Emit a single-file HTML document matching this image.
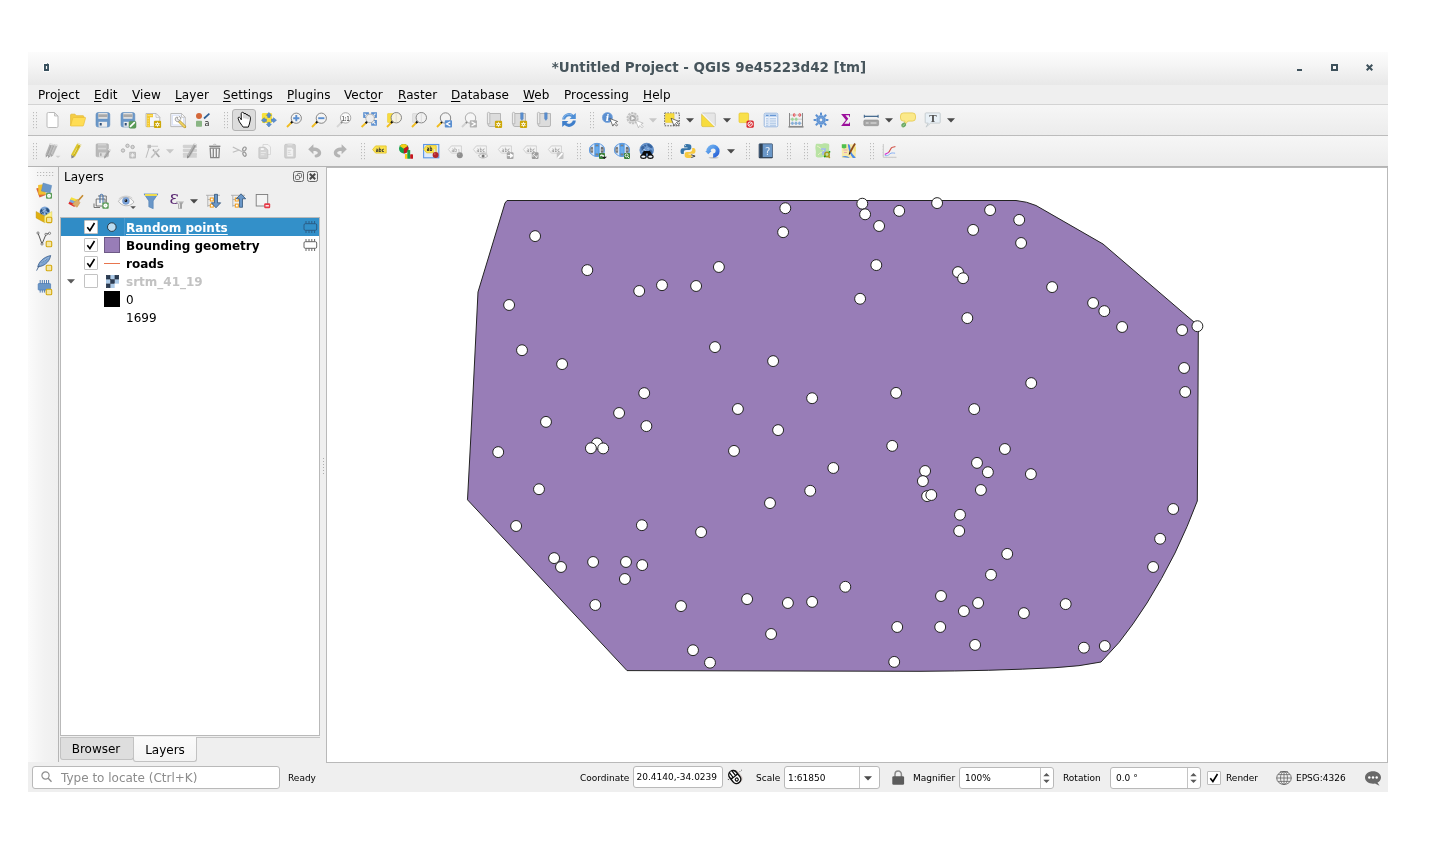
<!DOCTYPE html>
<html lang="en">
<head>
<meta charset="utf-8">
<title>*Untitled Project - QGIS</title>
<style>
html,body{margin:0;padding:0;background:#fff;}
body{width:1436px;height:860px;position:relative;overflow:hidden;font-family:"DejaVu Sans","Liberation Sans",sans-serif;font-size:12px;color:#000;}
.abs{position:absolute;}
#win{will-change:transform;position:absolute;left:28px;top:52px;width:1360px;height:740px;background:#efefef;}
#title{position:absolute;left:0;top:0;width:1360px;height:33px;background:linear-gradient(#fcfcfc 0%,#f5f5f5 40%,#e8e8e8 100%);}
#title .t{position:absolute;left:0;width:1360px;top:8px;padding-left:2px;box-sizing:border-box;text-align:center;font-weight:bold;font-size:13.45px;color:#47555c;line-height:16px;}
#menu{position:absolute;left:0;top:33px;width:1360px;height:19px;background:#efefef;border-bottom:1px solid #d3d3d3;}
#menu span{position:absolute;top:3px;line-height:15px;font-size:12px;white-space:nowrap;letter-spacing:.09px;}
#menu u{text-decoration:underline;text-underline-offset:2px;}
.tb{position:absolute;left:0;width:1360px;height:30px;background:linear-gradient(#f6f6f6,#ececec);}
#tb1{top:53px;border-bottom:1px solid #bcbcbc;}
#tb2{top:84px;border-bottom:1px solid #b4b4b4;}
.ic{position:absolute;width:16px;height:16px;overflow:visible;}
.hd{position:absolute;width:5px;height:18px;}
#ldock{position:absolute;left:0;top:115px;width:30px;height:595px;background:linear-gradient(90deg,#fbfbfb 0,#f2f2f2 55%,#efefef 100%);border-right:1px solid #b5b5b5;}
#canvas{position:absolute;left:298px;top:115px;width:1060px;height:594px;background:#fff;border:1px solid #b9b9b9;}
#tree{position:absolute;left:32px;top:165px;width:258px;height:517px;background:#fff;border:1px solid #b9b9b9;}
.row{position:absolute;left:0;width:258px;height:18px;}
.row .lbl{position:absolute;left:65px;top:2px;line-height:16px;font-size:12px;white-space:nowrap;}
.cb{position:absolute;left:23px;top:2px;width:12px;height:12px;background:#fff;border:1px solid #c3c3c3;border-radius:1px;}
.st{position:absolute;font-size:9px;line-height:12px;white-space:nowrap;top:720px;}
.fld{position:absolute;background:#fff;border:1px solid #b9b9b9;border-radius:3px;box-sizing:border-box;font-size:9px;line-height:20px;white-space:nowrap;overflow:hidden;}
</style>
</head>
<body>
<div id="win">
  <div id="title"><svg class="abs" style="left:15px;top:10px;width:7px;height:10px;overflow:visible" viewBox="-1 -1 7 10"><path d="M0 1h3l.7-1 .6 1h.7v7h-5z" fill="#fff" stroke="#fff" stroke-width="1.600" opacity=".9"/><path d="M0 1h3l.7-1 .6 1h.7v7h-5z" fill="#38505d"/><rect x="1.900" y="3" width="1.200" height="3" fill="#f4f6f7"/></svg>
<div class="abs" style="left:1268.600px;top:16.600px;width:5.600px;height:2.600px;background:#3f525c"></div>
<div class="abs" style="left:1303px;top:12px;width:3px;height:3px;border:2px solid #3f525c;background:#fbfbfb"></div>
<svg class="abs" style="left:1338px;top:12px;width:7px;height:7px" viewBox="0 0 7 7"><path d="M.7 .7l5.600 5.600M6.300 .7l-5.600 5.600" stroke="#3f525c" stroke-width="2"/></svg><div class="t">*Untitled Project - QGIS 9e45223d42 [tm]</div></div>
  <div id="menu">
    <span style="left:10px">Pro<u>j</u>ect</span>
    <span style="left:66px"><u>E</u>dit</span>
    <span style="left:104px"><u>V</u>iew</span>
    <span style="left:147px"><u>L</u>ayer</span>
    <span style="left:195px"><u>S</u>ettings</span>
    <span style="left:259px"><u>P</u>lugins</span>
    <span style="left:316px">Vect<u>o</u>r</span>
    <span style="left:370px"><u>R</u>aster</span>
    <span style="left:423px"><u>D</u>atabase</span>
    <span style="left:495px"><u>W</u>eb</span>
    <span style="left:536px">Pro<u>c</u>essing</span>
    <span style="left:615px"><u>H</u>elp</span>
  </div>
  <div class="tb" id="tb1"><svg class="hd" style="left:5px;top:7px" viewBox="0 0 5 18"><rect x="0" y="0" width="1" height="1.200" fill="#bcbcbc"/><rect x="0" y="3" width="1" height="1.200" fill="#bcbcbc"/><rect x="0" y="6" width="1" height="1.200" fill="#bcbcbc"/><rect x="0" y="9" width="1" height="1.200" fill="#bcbcbc"/><rect x="0" y="12" width="1" height="1.200" fill="#bcbcbc"/><rect x="0" y="15" width="1" height="1.200" fill="#bcbcbc"/><rect x="3" y="0" width="1" height="1.200" fill="#bcbcbc"/><rect x="3" y="3" width="1" height="1.200" fill="#bcbcbc"/><rect x="3" y="6" width="1" height="1.200" fill="#bcbcbc"/><rect x="3" y="9" width="1" height="1.200" fill="#bcbcbc"/><rect x="3" y="12" width="1" height="1.200" fill="#bcbcbc"/><rect x="3" y="15" width="1" height="1.200" fill="#bcbcbc"/></svg>
<svg class="ic" style="left:17px;top:7px;width:16px;height:16px" viewBox="0 0 16 16"><path d="M3.5 .5h6l3.5 3.5v10.2a1.3 1.3 0 0 1-1.3 1.3h-8.400a1.300 1.300 0 0 1-1.300-1.300v-12.400a1.300 1.300 0 0 1 1.300-1.300z" fill="#fff" stroke="#b9b9b9" stroke-width="1"/><path d="M9.500 .5v3.500h3.500z" fill="#e4e4e4" stroke="#b9b9b9" stroke-width=".8" stroke-linejoin="round"/></svg>
<svg class="ic" style="left:42px;top:7px;width:16px;height:16px" viewBox="0 0 16 16"><path d="M.6 13.500v-10.500a.8 .8 0 0 1 .8-.8h3.600l1.300 1.500h6.700a.8 .8 0 0 1 .8 .8v2z" fill="#f5cd45" stroke="#e3b62a" stroke-width=".7"/><path d="M.6 13.700l2.200-7.600a.8 .8 0 0 1 .8-.6h11.400a.5 .5 0 0 1 .5 .7l-2 7.200a.8 .8 0 0 1-.8 .6h-11.500a.6 .6 0 0 1-.6-.3z" fill="#ffdd55" stroke="#e9bf3a" stroke-width=".7"/></svg>
<svg class="ic" style="left:67px;top:7px;width:16px;height:16px" viewBox="0 0 16 16"><rect x="1" y=".6" width="13.800" height="14.400" rx="2" fill="#6a97c8" stroke="#5e89ba" stroke-width=".6"/><rect x="3.300" y="1" width="9.200" height="5.800" fill="#e2e2e2"/><rect x="3.300" y="2.300" width="9.200" height="2.800" fill="#a9a9a9"/><rect x="3.600" y="9.800" width="8.500" height="5" fill="#ececec"/><rect x="4.700" y="11" width="2" height="2.500" fill="#2c4d78"/></svg>
<svg class="ic" style="left:92px;top:7px;width:16px;height:16px" viewBox="0 0 16 16"><rect x="1" y=".6" width="13.800" height="14.400" rx="2" fill="#6a97c8" stroke="#5e89ba" stroke-width=".6"/><rect x="3.300" y="1" width="9.200" height="5.800" fill="#e2e2e2"/><rect x="3.300" y="2.300" width="9.200" height="2.800" fill="#a9a9a9"/><rect x="3.600" y="9.800" width="8.500" height="5" fill="#ececec"/><rect x="4.700" y="11" width="2" height="2.500" fill="#2c4d78"/><rect x="9" y="9.200" width="7" height="7" rx="1.500" fill="#5a9c57" stroke="#4d8a4a" stroke-width=".5"/><path d="M10.500 14.300l3.800-3.700" stroke="#fff" stroke-width="1.700" stroke-linecap="round"/></svg>
<svg class="ic" style="left:117px;top:7px;width:16px;height:16px" viewBox="0 0 16 16"><path d="M1 1.500h10l3.800 3.800v9.200h-13.800z" fill="#f4f6fb" stroke="#b5b5b5" stroke-width=".9"/><path d="M11 1.500v3.800h3.800z" fill="#fff" stroke="#b5b5b5" stroke-width=".7"/><path d="M1.700 2h6.300v3.200h-3v10h-3.300z" fill="#f3c931"/><path d="M2.500 3.500h5M2.500 6.500h1.500M2.500 9h1.500M2.500 11.500h1.500M2.500 13.800h1.500" stroke="#fbe58a" stroke-width=".7"/><rect x="8.900" y="8.700" width="7.200" height="7.300" rx="1.100" fill="#cda80a"/><path d="M12.45 9.40L13.07 11.32L15.05 10.90L13.70 12.40L15.05 13.90L13.07 13.48L12.45 15.40L11.82 13.48L9.85 13.90L11.20 12.40L9.85 10.90L11.82 11.32z" fill="#fff"/><circle cx="12.450" cy="12.400" r=".7" fill="#cda80a"/></svg>
<svg class="ic" style="left:142px;top:7px;width:16px;height:16px" viewBox="0 0 16 16"><path d="M.8 1.500h10.700l3.700 3.700v9.400h-14.400z" fill="#fafbff" stroke="#b2b2b2" stroke-width=".9"/><path d="M2.300 3.200h8.500l2.800 2.800v7h-11.300z" fill="#fff" stroke="#d5def5" stroke-width="1"/><path d="M11.500 1.500v3.700h3.700z" fill="#fff" stroke="#b2b2b2" stroke-width=".7"/><path d="M9.500 9.500l5.300 5.300" stroke="#b5952a" stroke-width="2.800" stroke-linecap="round"/><path d="M9.600 9.600l5 5" stroke="#f2d565" stroke-width="1.600" stroke-linecap="round"/><path d="M6.200 5.200a2.500 2.500 0 1 0 3.800 3l-1.600-.3-.9-1.100 .4-1.500zM8.800 4.300a2.500 2.500 0 0 1 1.900 3.300" fill="#eee" stroke="#8a8a8a" stroke-width=".8"/></svg>
<svg class="ic" style="left:167px;top:7px;width:16px;height:16px" viewBox="0 0 16 16"><circle cx="4" cy="4" r="3" fill="#d4683a"/><rect x="1" y="8.700" width="6" height="6" rx=".8" fill="#8ab584"/><path d="M9 6.500l5.400-4.800" stroke="#2e5f95" stroke-width="1.700"/><text x="9.400" y="14" font-family="DejaVu Sans" font-size="8" fill="#222">a</text></svg>
<svg class="hd" style="left:196px;top:7px" viewBox="0 0 5 18"><rect x="0" y="0" width="1" height="1.200" fill="#bcbcbc"/><rect x="0" y="3" width="1" height="1.200" fill="#bcbcbc"/><rect x="0" y="6" width="1" height="1.200" fill="#bcbcbc"/><rect x="0" y="9" width="1" height="1.200" fill="#bcbcbc"/><rect x="0" y="12" width="1" height="1.200" fill="#bcbcbc"/><rect x="0" y="15" width="1" height="1.200" fill="#bcbcbc"/><rect x="3" y="0" width="1" height="1.200" fill="#bcbcbc"/><rect x="3" y="3" width="1" height="1.200" fill="#bcbcbc"/><rect x="3" y="6" width="1" height="1.200" fill="#bcbcbc"/><rect x="3" y="9" width="1" height="1.200" fill="#bcbcbc"/><rect x="3" y="12" width="1" height="1.200" fill="#bcbcbc"/><rect x="3" y="15" width="1" height="1.200" fill="#bcbcbc"/></svg>
<div class="abs" style="left:204px;top:4px;width:22px;height:20px;border:1px solid #b3b3b3;border-radius:3px;background:#dcdcdc"></div>
<svg class="ic" style="left:208px;top:7px;width:16px;height:16px" viewBox="0 0 16 16"><path d="M5.3 7.800L5.200 1.700Q5.300 .3 6.600 .3Q7.900 .3 8 1.700Q9 .9 9.900 1.700L10.100 2.700Q11 2 11.900 2.900L12.100 3.900Q13.200 3.300 14 4.300Q14.600 5.600 14.300 8L13.400 12L12.300 15.100L7.200 15.100L6 13.500L3.400 9.800L2.100 6.200Q2.100 5 3.300 5.200Q4.300 5.700 5.300 7.800Z" fill="#fff" stroke="#111" stroke-width="1" stroke-linejoin="round"/><path d="M8 2v4.300M10 3v3.600M12 4.200v3" stroke="#9a9a9a" stroke-width=".8"/></svg>
<svg class="ic" style="left:233px;top:7px;width:16px;height:16px" viewBox="0 0 16 16"><rect x=".9" y=".9" width="10.200" height="10.100" rx="1.300" fill="#f9e13a"/><g fill="#5b8fd0" stroke="#3f75b5" stroke-width=".5" stroke-linejoin="round"><path d="M7.900 .4l2.500 3h-1.300v2h-2.400v-2h-1.300z"/><path d="M7.900 15l2.500-2.800h-1.300v-1.800h-2.400v1.800h-1.300z"/><path d="M.4 8.200l2.900-2.500v1.300h2.100v2.400h-2.100v1.300z"/><path d="M15.500 8.200l-3-2.500v1.300h-2v2.400h2v1.300z"/></g></svg>
<svg class="ic" style="left:258px;top:7px;width:16px;height:16px" viewBox="0 0 16 16"><path d="M1 15l4.600-4.700" stroke="#f0bc1f" stroke-width="1.900"/><path d="M5 11l1.700-1.700" stroke="#111" stroke-width="2"/><circle cx="10.3" cy="6.2" r="5.1" fill="#f4f4f4" stroke="#7a7a7a" stroke-width=".9"/><path d="M10.300 3.100v6.200M7.200 6.200h6.200" stroke="#5b8fd0" stroke-width="1.900"/></svg>
<svg class="ic" style="left:283px;top:7px;width:16px;height:16px" viewBox="0 0 16 16"><path d="M1 15l4.600-4.700" stroke="#f0bc1f" stroke-width="1.900"/><path d="M5 11l1.700-1.700" stroke="#111" stroke-width="2"/><circle cx="10.3" cy="6.2" r="5.1" fill="#f4f4f4" stroke="#7a7a7a" stroke-width=".9"/><path d="M7.200 6.200h6.200" stroke="#5b8fd0" stroke-width="1.900"/></svg>
<svg class="ic" style="left:308px;top:7px;width:16px;height:16px" viewBox="0 0 16 16"><path d="M1 15l4.600-4.700" stroke="#d6d6d6" stroke-width="1.900"/><path d="M5 11l1.700-1.700" stroke="#8a8a8a" stroke-width="2"/><circle cx="9.6" cy="5.9" r="5.2" fill="#fbfbfb" stroke="#a0a0a0" stroke-width=".9"/><text x="5.700" y="8.600" font-family="DejaVu Sans" font-weight="bold" font-size="7" fill="#6a6a6a" textLength="8" lengthAdjust="spacingAndGlyphs">1:1</text></svg>
<svg class="ic" style="left:333px;top:7px;width:16px;height:16px" viewBox="0 0 16 16"><g transform="translate(2.2 0.2) rotate(0 2.75 2.75)"><rect width="5.700" height="5.700" fill="#5b8fd0"/><path d="M5.500 5.500l-3.800-1 1-1-1.700-1.700 .8-.8 1.700 1.700 1-1z" fill="#f4f4f4"/></g><g transform="translate(10.4 0.2) rotate(90 2.75 2.75)"><rect width="5.700" height="5.700" fill="#5b8fd0"/><path d="M5.500 5.500l-3.800-1 1-1-1.700-1.700 .8-.8 1.700 1.700 1-1z" fill="#f4f4f4"/></g><g transform="translate(10.4 8.2) rotate(180 2.75 2.75)"><rect width="5.700" height="5.700" fill="#5b8fd0"/><path d="M5.500 5.500l-3.800-1 1-1-1.700-1.700 .8-.8 1.700 1.700 1-1z" fill="#f4f4f4"/></g><circle cx="9.100" cy="6.400" r="4.300" fill="#ececec" stroke="#9a9a9a" stroke-width=".7"/><path d="M.6 15l4.600-4.400" stroke="#f0bc1f" stroke-width="1.900"/><path d="M4.600 11.200l1.500-1.500" stroke="#111" stroke-width="2"/></svg>
<svg class="ic" style="left:358px;top:7px;width:16px;height:16px" viewBox="0 0 16 16"><rect x="1.500" y="1.500" width="7" height="9" rx=".6" fill="#f7dc3d" stroke="#e8c62a" stroke-width=".5"/><path d="M1 15l4.600-4.700" stroke="#f0bc1f" stroke-width="1.900"/><path d="M5 11l1.700-1.700" stroke="#111" stroke-width="2"/><circle cx="10.3" cy="5.7" r="5.2" fill="#f4f1e3" stroke="#7a7a7a" stroke-width=".9"/><path d="M10.300 1v9.400" stroke="#e0dccb" stroke-width="1.500" opacity=".7"/></svg>
<svg class="ic" style="left:383px;top:7px;width:16px;height:16px" viewBox="0 0 16 16"><rect x="1.500" y="1.500" width="7" height="9" rx=".6" fill="#e3e3e3" stroke="#cfcfcf" stroke-width=".5"/><path d="M1 15l4.600-4.700" stroke="#f0bc1f" stroke-width="1.900"/><path d="M5 11l1.700-1.700" stroke="#111" stroke-width="2"/><circle cx="10.3" cy="5.7" r="5.2" fill="#f1f1f1" stroke="#7a7a7a" stroke-width=".9"/><path d="M10.300 1v9.400" stroke="#dcdcdc" stroke-width="1.200" opacity=".8"/></svg>
<svg class="ic" style="left:408px;top:7px;width:16px;height:16px" viewBox="0 0 16 16"><path d="M1 15l4.600-4.700" stroke="#f0bc1f" stroke-width="1.900"/><path d="M5 11l1.700-1.700" stroke="#111" stroke-width="2"/><circle cx="9.5" cy="6" r="5.2" fill="#f3f3f3" stroke="#7a7a7a" stroke-width=".9"/><rect x="8.800" y="8.300" width="7.200" height="7.200" rx=".8" fill="#5b8fd0"/><path d="M14.300 9.800l-3.800 2.100 3.800 2.100" fill="none" stroke="#fff" stroke-width="1.300"/></svg>
<svg class="ic" style="left:433px;top:7px;width:16px;height:16px" viewBox="0 0 16 16"><path d="M1 15l4.600-4.700" stroke="#d0d0d0" stroke-width="1.900"/><path d="M5 11l1.700-1.700" stroke="#888" stroke-width="2"/><circle cx="9.5" cy="6" r="5.2" fill="#f6f6f6" stroke="#a5a5a5" stroke-width=".9"/><rect x="8.800" y="8.300" width="7.200" height="7.200" rx=".8" fill="#b3b3b3"/><path d="M10.500 9.800l3.800 2.100-3.800 2.100" fill="none" stroke="#fff" stroke-width="1.300"/></svg>
<svg class="ic" style="left:458px;top:7px;width:16px;height:16px" viewBox="0 0 16 16"><path d="M2 1.500h12.500v11.500a1.500 1.500 0 0 1-1.500 1.500h-9a2 2 0 0 1-2-2z" fill="#dcdcdc" stroke="#b0b0b0" stroke-width=".9"/><path d="M1.400 1.500a1.200 1.200 0 0 1 2.400 0v10.300h-2.400z" fill="#ececec" stroke="#b0b0b0" stroke-width=".8"/><rect x="8.900" y="8.700" width="7.200" height="7.300" rx="1.100" fill="#cda80a"/><path d="M12.45 9.40L13.07 11.32L15.05 10.90L13.70 12.40L15.05 13.90L13.07 13.48L12.45 15.40L11.82 13.48L9.85 13.90L11.20 12.40L9.85 10.90L11.82 11.32z" fill="#fff"/><circle cx="12.450" cy="12.400" r=".7" fill="#cda80a"/></svg>
<svg class="ic" style="left:483px;top:7px;width:16px;height:16px" viewBox="0 0 16 16"><path d="M2 1.500h12.500v11.500a1.500 1.500 0 0 1-1.500 1.500h-9a2 2 0 0 1-2-2z" fill="#dcdcdc" stroke="#b0b0b0" stroke-width=".9"/><path d="M1.400 1.500a1.200 1.200 0 0 1 2.400 0v10.300h-2.400z" fill="#ececec" stroke="#b0b0b0" stroke-width=".8"/><path d="M9.600 .8h2.600v6l-1.300 1.600-1.300-1.600z" fill="#5b8fd0" stroke="#4878b5" stroke-width=".4"/><rect x="8.900" y="8.700" width="7.200" height="7.300" rx="1.100" fill="#cda80a"/><path d="M12.45 9.40L13.07 11.32L15.05 10.90L13.70 12.40L15.05 13.90L13.07 13.48L12.45 15.40L11.82 13.48L9.85 13.90L11.20 12.40L9.85 10.90L11.82 11.32z" fill="#fff"/><circle cx="12.450" cy="12.400" r=".7" fill="#cda80a"/></svg>
<svg class="ic" style="left:508px;top:7px;width:16px;height:16px" viewBox="0 0 16 16"><path d="M2 1.500h12.500v11.500a1.500 1.500 0 0 1-1.500 1.500h-9a2 2 0 0 1-2-2z" fill="#dcdcdc" stroke="#b0b0b0" stroke-width=".9"/><path d="M1.400 1.500a1.200 1.200 0 0 1 2.400 0v10.300h-2.400z" fill="#ececec" stroke="#b0b0b0" stroke-width=".8"/><path d="M8.600 .8h2.600v6l-1.300 1.600-1.300-1.600z" fill="#5b8fd0" stroke="#4878b5" stroke-width=".4"/></svg>
<svg class="ic" style="left:533px;top:7px;width:16px;height:16px" viewBox="0 0 16 16"><path d="M1.200 7.500a6.800 6.800 0 0 1 11.300-4.600l2.300-2v6h-6.200l2-1.900a4.200 4.200 0 0 0-6.500 2.500z" fill="#4f8fd6"/><path d="M14.800 8.500a6.800 6.800 0 0 1-11.300 4.600l-2.300 2v-6h6.200l-2 1.900a4.200 4.200 0 0 0 6.500-2.500z" fill="#3f7fcb"/><path d="M2 6.800a6 6 0 0 1 9-3.800" fill="none" stroke="#9cc3ee" stroke-width=".8"/></svg>
<svg class="hd" style="left:562px;top:7px" viewBox="0 0 5 18"><rect x="0" y="0" width="1" height="1.200" fill="#bcbcbc"/><rect x="0" y="3" width="1" height="1.200" fill="#bcbcbc"/><rect x="0" y="6" width="1" height="1.200" fill="#bcbcbc"/><rect x="0" y="9" width="1" height="1.200" fill="#bcbcbc"/><rect x="0" y="12" width="1" height="1.200" fill="#bcbcbc"/><rect x="0" y="15" width="1" height="1.200" fill="#bcbcbc"/><rect x="3" y="0" width="1" height="1.200" fill="#bcbcbc"/><rect x="3" y="3" width="1" height="1.200" fill="#bcbcbc"/><rect x="3" y="6" width="1" height="1.200" fill="#bcbcbc"/><rect x="3" y="9" width="1" height="1.200" fill="#bcbcbc"/><rect x="3" y="12" width="1" height="1.200" fill="#bcbcbc"/><rect x="3" y="15" width="1" height="1.200" fill="#bcbcbc"/></svg>
<svg class="ic" style="left:573px;top:7px;width:16px;height:16px" viewBox="0 0 16 16"><circle cx="6.400" cy="5.500" r="5.300" fill="#5b8fd0"/><circle cx="6.400" cy="5.500" r="5" fill="none" stroke="#8fb5e4" stroke-width=".5"/><text x="4.700" y="8.900" font-family="DejaVu Serif" font-style="italic" font-weight="bold" font-size="9" fill="#fff">i</text><path d="M8.8 6.5l0 8.200 2-1.700 1.400 3 1.500-.7-1.400-2.900 2.600-.2z" fill="#fff" stroke="#333" stroke-width=".6" transform="rotate(-22 8.8 6.5)"/></svg>
<svg class="ic" style="left:598px;top:7px;width:16px;height:16px" viewBox="0 0 16 16"><circle cx="6.600" cy="6.200" r="5.200" fill="none" stroke="#c2c2c2" stroke-width="1.800" stroke-dasharray="2.300 .9"/><circle cx="6.600" cy="6.200" r="4.300" fill="#f0f0f0" stroke="#b5b5b5" stroke-width=".6"/><circle cx="6.600" cy="6.200" r="3.300" fill="#ababab"/><path d="M5.400 4.200l3.500 2-3.500 2z" fill="#f6f6f6"/><path d="M9.4 8.2l0 8.200 2-1.700 1.400 3 1.500-.7-1.400-2.900 2.600-.2z" fill="#fff" stroke="#b0b0b0" stroke-width=".6" transform="rotate(-22 9.4 8.2)"/></svg>
<svg class="ic" style="left:636px;top:7px;width:16px;height:16px" viewBox="0 0 16 16"><rect x=".7" y="1" width="14.600" height="12.800" fill="#eee" stroke="#555" stroke-width="1" stroke-dasharray="1.500 1.200"/><rect x="1.300" y="1.600" width="8.800" height="8.800" rx=".6" fill="#f7dc3d" stroke="#e5c42d" stroke-width=".5"/><path d="M7 6.3l0 8.200 2-1.700 1.400 3 1.500-.7-1.400-2.900 2.600-.2z" fill="#fff" stroke="#333" stroke-width=".6" transform="rotate(-22 7 6.3)"/></svg>
<svg class="ic" style="left:673px;top:7px;width:16px;height:16px" viewBox="0 0 16 16"><rect x=".7" y="1" width="13.600" height="13.600" rx="1.200" fill="#e6e6e6" stroke="#c4c4c4" stroke-width=".8"/><path d="M.7 2.300v11.100a1.200 1.200 0 0 0 1.200 1.200h11.100z" fill="#f7dc3d" stroke="#e5c42d" stroke-width=".6"/><path d="M1 1.300l13 13" stroke="#fff" stroke-width=".9"/></svg>
<svg class="ic" style="left:710px;top:7px;width:16px;height:16px" viewBox="0 0 16 16"><rect x="1" y="1" width="9.600" height="9.600" rx="1.200" fill="#f9e04a" stroke="#e5c42d" stroke-width=".7"/><rect x="8.500" y="8.500" width="7.300" height="7.300" rx="1.600" fill="#d9262c"/><circle cx="12.150" cy="12.150" r="2.200" fill="none" stroke="#fff" stroke-width="1"/><path d="M10.500 13.800l3.300-3.300" stroke="#fff" stroke-width="1"/></svg>
<svg class="ic" style="left:735px;top:7px;width:16px;height:16px" viewBox="0 0 16 16"><rect x="1.200" y="1.200" width="13.600" height="13.600" rx="1.200" fill="#eef3fb" stroke="#8fb1dc" stroke-width=".9"/><rect x="1.800" y="1.800" width="12.400" height="3.200" fill="#c3d7f0"/><path d="M3 3.400h2.500M7 3.400h6" stroke="#5b8fd0" stroke-width="1"/><path d="M5.900 5.500v9" stroke="#b7cdea" stroke-width=".7"/><path d="M3 6.800h2M7 6.800h6M3 9h2M7 9h6M3 11.200h2M7 11.200h6M3 13.200h2M7 13.200h6" stroke="#8fb1dc" stroke-width=".8"/></svg>
<svg class="ic" style="left:760px;top:7px;width:16px;height:16px" viewBox="0 0 16 16"><path d="M1.500 1v14M14.500 1v14" stroke="#8a8a8a" stroke-width="1"/><path d="M.5 14.800h15" stroke="#8a8a8a" stroke-width="1.700"/><path d="M2 3h12M2 7.200h12M2 11.300h12" stroke="#b5b5b5" stroke-width=".7"/><g fill="#e04a4f"><ellipse cx="6.200" cy="3" rx="1.300" ry="1.700"/><ellipse cx="11.700" cy="3" rx="1.300" ry="1.700"/></g><g fill="#9fd69a"><ellipse cx="4.400" cy="7.200" rx="1.300" ry="1.700"/><ellipse cx="8.200" cy="7.200" rx="1.300" ry="1.700"/></g><g fill="#86b0da"><ellipse cx="4.400" cy="11.300" rx="1.300" ry="1.700"/><ellipse cx="8" cy="11.300" rx="1.300" ry="1.700"/><ellipse cx="11.500" cy="11.300" rx="1.300" ry="1.700"/></g><g fill="#fff" opacity=".7"><ellipse cx="6.200" cy="3" rx=".4" ry="1"/><ellipse cx="11.700" cy="3" rx=".4" ry="1"/></g></svg>
<svg class="ic" style="left:785px;top:7px;width:16px;height:16px" viewBox="0 0 16 16"><rect x="7" y=".6" width="2" height="3.600" rx=".4" fill="#5b8fd0" transform="rotate(0 8 8)"/><rect x="7" y=".6" width="2" height="3.600" rx=".4" fill="#5b8fd0" transform="rotate(45 8 8)"/><rect x="7" y=".6" width="2" height="3.600" rx=".4" fill="#5b8fd0" transform="rotate(90 8 8)"/><rect x="7" y=".6" width="2" height="3.600" rx=".4" fill="#5b8fd0" transform="rotate(135 8 8)"/><rect x="7" y=".6" width="2" height="3.600" rx=".4" fill="#5b8fd0" transform="rotate(180 8 8)"/><rect x="7" y=".6" width="2" height="3.600" rx=".4" fill="#5b8fd0" transform="rotate(225 8 8)"/><rect x="7" y=".6" width="2" height="3.600" rx=".4" fill="#5b8fd0" transform="rotate(270 8 8)"/><rect x="7" y=".6" width="2" height="3.600" rx=".4" fill="#5b8fd0" transform="rotate(315 8 8)"/><circle cx="8" cy="8" r="3.100" fill="none" stroke="#5b8fd0" stroke-width="3.400"/><circle cx="8" cy="8" r="4.600" fill="none" stroke="#a9c8ec" stroke-width=".5"/><circle cx="8" cy="8" r="2.900" fill="none" stroke="#8db3e2" stroke-width=".5"/></svg>
<svg class="ic" style="left:810px;top:7px;width:16px;height:16px" viewBox="0 0 16 16"><text x="2.500" y="14" font-family="DejaVu Serif" font-weight="bold" font-size="17" fill="#9b0e9b" textLength="10.500" lengthAdjust="spacingAndGlyphs">Σ</text></svg>
<svg class="ic" style="left:835px;top:7px;width:16px;height:16px" viewBox="0 0 16 16"><path d="M1.300 4.300h13.800" stroke="#2b5680" stroke-width="1.100"/><path d="M1.300 2.800v3M15.100 2.800v3" stroke="#2b5680" stroke-width=".9"/><rect x=".8" y="8" width="14.800" height="5.700" rx="1.200" fill="#a5a5a5" stroke="#8c8c8c" stroke-width=".6"/><path d="M2.800 11h2.800M7.500 11h6" stroke="#e6e6e6" stroke-width="1.100"/></svg>
<svg class="ic" style="left:872px;top:7px;width:16px;height:16px" viewBox="0 0 16 16"><path d="M3.500 .9h9a3 3 0 0 1 3 3v2.200a3 3 0 0 1-3 3h-4.500l-3.800 4.500 .8-4.500h-1.500a3 3 0 0 1-3-3v-2.200a3 3 0 0 1 3-3z" fill="#fbe98a" stroke="#e6c94a" stroke-width=".8"/><ellipse cx="3.700" cy="13" rx="2.600" ry="2.100" fill="#6aa864" transform="rotate(-35 3.700 13)"/><path d="M2.600 14l2.200-2" stroke="#b7dcb2" stroke-width=".8"/></svg>
<svg class="ic" style="left:897px;top:7px;width:16px;height:16px" viewBox="0 0 16 16"><path d="M1 .9h13.400a.8 .8 0 0 1 .8 .8v8.600a.8 .8 0 0 1-.8 .8h-8.700l-4.700 4 2.300-4h-2.300a.8 .8 0 0 1-.8-.8v-8.600a.8 .8 0 0 1 .8-.8z" fill="#e8f0f6" stroke="#c3c9cd" stroke-width=".9"/><text x="4.300" y="9.800" font-family="DejaVu Serif" font-weight="bold" font-size="10" fill="#555">T</text></svg>
<svg class="ic" style="left:621px;top:13px;width:8px;height:5px" viewBox="0 0 8 5"><path d="M0 .3h8l-4 4.200z" fill="#c8c8c8"/></svg>
<svg class="ic" style="left:658px;top:13px;width:8px;height:5px" viewBox="0 0 8 5"><path d="M0 .3h8l-4 4.200z" fill="#4a4a4a"/></svg>
<svg class="ic" style="left:695px;top:13px;width:8px;height:5px" viewBox="0 0 8 5"><path d="M0 .3h8l-4 4.200z" fill="#4a4a4a"/></svg>
<svg class="ic" style="left:857px;top:13px;width:8px;height:5px" viewBox="0 0 8 5"><path d="M0 .3h8l-4 4.200z" fill="#4a4a4a"/></svg>
<svg class="ic" style="left:919px;top:13px;width:8px;height:5px" viewBox="0 0 8 5"><path d="M0 .3h8l-4 4.200z" fill="#4a4a4a"/></svg></div>
  <div class="tb" id="tb2"><svg class="hd" style="left:5px;top:7px" viewBox="0 0 5 18"><rect x="0" y="0" width="1" height="1.200" fill="#bcbcbc"/><rect x="0" y="3" width="1" height="1.200" fill="#bcbcbc"/><rect x="0" y="6" width="1" height="1.200" fill="#bcbcbc"/><rect x="0" y="9" width="1" height="1.200" fill="#bcbcbc"/><rect x="0" y="12" width="1" height="1.200" fill="#bcbcbc"/><rect x="0" y="15" width="1" height="1.200" fill="#bcbcbc"/><rect x="3" y="0" width="1" height="1.200" fill="#bcbcbc"/><rect x="3" y="3" width="1" height="1.200" fill="#bcbcbc"/><rect x="3" y="6" width="1" height="1.200" fill="#bcbcbc"/><rect x="3" y="9" width="1" height="1.200" fill="#bcbcbc"/><rect x="3" y="12" width="1" height="1.200" fill="#bcbcbc"/><rect x="3" y="15" width="1" height="1.200" fill="#bcbcbc"/></svg>
<svg class="ic" style="left:17px;top:7px;width:16px;height:16px" viewBox="0 0 16 16"><path d="M0.80 14.60L3.27 12.13L0.66 11.11z" fill="#9a9a9a"/><path d="M3.27 12.13L7.50 1.31L4.90 0.29L0.66 11.11z" fill="#b2b2b2"/><path d="M2.36 11.77L6.59 0.95" stroke="#9d9d9d" stroke-width=".9"/><path d="M7.07 2.43L7.50 1.31L4.90 0.29L4.46 1.41z" fill="#eee" opacity=".85"/><path d="M3.20 15.30L5.68 12.84L3.08 11.81z" fill="#9a9a9a"/><path d="M5.68 12.84L10.10 1.72L7.50 0.68L3.08 11.81z" fill="#b9b9b9"/><path d="M4.77 12.48L9.19 1.36" stroke="#a5a5a5" stroke-width=".9"/><path d="M9.66 2.83L10.10 1.72L7.50 0.68L7.06 1.80z" fill="#eee" opacity=".85"/><path d="M5.80 14.30L8.39 11.95L5.83 10.81z" fill="#a5a5a5"/><path d="M8.39 11.95L12.78 2.17L10.22 1.03L5.83 10.81z" fill="#c3c3c3"/><path d="M7.49 11.55L11.88 1.77" stroke="#b0b0b0" stroke-width=".9"/><path d="M12.29 3.27L12.78 2.17L10.22 1.03L9.73 2.12z" fill="#eee" opacity=".85"/><path d="M10.500 12.700h5l-2.500 2.200z" fill="#cfcfcf"/></svg>
<svg class="ic" style="left:42px;top:7px;width:16px;height:16px" viewBox="0 0 16 16"><path d="M1.50 15.50L4.96 13.74L1.10 11.64z" fill="#858585"/><path d="M4.96 13.74L11.43 1.85L7.57 -0.25L1.10 11.64z" fill="#dcc62e"/><path d="M3.61 13.00L10.08 1.12" stroke="#b49c14" stroke-width=".9"/><path d="M10.86 2.91L11.43 1.85L7.57 -0.25L6.99 0.80z" fill="#eee" opacity=".85"/><path d="M3.900 11.300l3.200-6" stroke="#f5eb8c" stroke-width="1" opacity=".7"/></svg>
<svg class="ic" style="left:67px;top:7px;width:16px;height:16px" viewBox="0 0 16 16"><rect x="1" y=".8" width="12.500" height="13" rx="1.200" fill="#b9b9b9" stroke="#adadad" stroke-width=".5"/><rect x="3" y="1.200" width="8.300" height="5.200" fill="#d6d6d6"/><rect x="3" y="2.300" width="8.300" height="2.500" fill="#c0c0c0"/><rect x="4" y="9.500" width="7.500" height="4.300" fill="#dedede"/><rect x="5" y="10.300" width="1.600" height="2.500" fill="#a9a9a9"/><path d="M9.00 15.80L11.76 13.73L9.54 12.39z" fill="#999"/><path d="M11.76 13.73L15.71 7.17L13.49 5.83L9.54 12.39z" fill="#b0b0b0"/><path d="M10.98 13.26L14.93 6.70" stroke="#9c9c9c" stroke-width=".9"/><path d="M15.09 8.20L15.71 7.17L13.49 5.83L12.87 6.86z" fill="#eee" opacity=".85"/></svg>
<svg class="ic" style="left:92px;top:7px;width:16px;height:16px" viewBox="0 0 16 16"><g fill="#d7d7d7" stroke="#a9a9a9" stroke-width=".9"><circle cx="3" cy="7.500" r="1.700"/><circle cx="7.500" cy="2.800" r="1.700"/><circle cx="12.600" cy="4" r="1.700"/></g><rect x="9.200" y="8.800" width="6.800" height="6.800" rx="1" fill="#bcbcbc"/><path d="M12.600 10v4.400M10.400 12.200h4.400M11 10.600l3.200 3.200M14.200 10.600l-3.200 3.200" stroke="#f2f2f2" stroke-width=".9"/></svg>
<svg class="ic" style="left:117px;top:7px;width:16px;height:16px" viewBox="0 0 16 16"><rect x="2.500" y="1.800" width="3.500" height="3.300" fill="#bcbcbc"/><path d="M6 3.300h7" stroke="#cdcdcd" stroke-width="1.200"/><path d="M4 5l-3 9.800" stroke="#bcbcbc" stroke-width="1"/><path d="M8 6.500l6.300 7.500" stroke="#aaa" stroke-width="1.800"/><path d="M14.200 6l-8 8.800" stroke="#c2c2c2" stroke-width="1.600"/><path d="M8.500 9l3-3.300" stroke="#e2e2e2" stroke-width="1"/></svg>
<svg class="ic" style="left:154px;top:7px;width:16px;height:16px" viewBox="0 0 16 16"><g fill="#d2d2d2"><rect x=".8" y="1.700" width="14.200" height="3.300" rx="1"/><rect x=".8" y="5.700" width="14.200" height="3.300" rx="1"/><rect x=".8" y="9.700" width="14.200" height="3.300" rx="1"/><rect x=".8" y="13" width="14.200" height="1.800" rx=".8"/></g><path d="M5.00 15.60L8.00 13.65L5.23 12.03z" fill="#8a8a8a"/><path d="M8.00 13.65L14.98 1.71L12.22 0.09L5.23 12.03z" fill="#b0b0b0"/><path d="M7.03 13.08L14.01 1.14" stroke="#8f8f8f" stroke-width=".9"/><path d="M14.38 2.74L14.98 1.71L12.22 0.09L11.61 1.13z" fill="#eee" opacity=".85"/></svg>
<svg class="ic" style="left:179px;top:7px;width:16px;height:16px" viewBox="0 0 16 16"><path d="M6 2.200c.3-1.300 3.200-1.300 3.500 0" fill="none" stroke="#b5b5b5" stroke-width=".9"/><path d="M2.200 3.300h11.200" stroke="#858585" stroke-width="1.400"/><path d="M3.200 5.200h9.200l-.5 9.400h-8.200z" fill="#f4f4f4" stroke="#858585" stroke-width="1.300" stroke-linejoin="round"/><path d="M6.300 5.500v8.700M9.300 5.500v8.700" stroke="#858585" stroke-width="1.300"/></svg>
<svg class="ic" style="left:204px;top:7px;width:16px;height:16px" viewBox="0 0 16 16"><path d="M.8 4l10 5M.8 9.300l6.500-2.300" stroke="#bdbdbd" stroke-width="1.200"/><ellipse cx="12.400" cy="6" rx="1.500" ry="2.100" fill="none" stroke="#999" stroke-width="1.200" transform="rotate(35 12.400 6)"/><ellipse cx="12.500" cy="11.200" rx="1.500" ry="2.100" fill="none" stroke="#999" stroke-width="1.200" transform="rotate(-25 12.500 11.200)"/></svg>
<svg class="ic" style="left:229px;top:7px;width:16px;height:16px" viewBox="0 0 16 16"><path d="M6 1.500h5l2.500 2.500v7.500h-7.500z" fill="#f4f4f4" stroke="#d2d2d2" stroke-width=".8"/><path d="M2.700 4.300h5.300l2.800 2.800v7.500a.8 .8 0 0 1-.8 .8h-7.300a.8 .8 0 0 1-.8-.8v-9.500a.8 .8 0 0 1 .8-.8z" fill="#d4d4d4" stroke="#c0c0c0" stroke-width=".8"/><rect x="3.800" y="5.200" width="3" height="1.800" fill="#f8f8f8"/><path d="M3.800 9.500h5M3.800 11.700h3.500" stroke="#e8e8e8" stroke-width="1"/></svg>
<svg class="ic" style="left:254px;top:7px;width:16px;height:16px" viewBox="0 0 16 16"><rect x="2.700" y="1.300" width="10.600" height="13.800" rx="1.200" fill="#d0d0d0" stroke="#c2c2c2" stroke-width=".8"/><rect x="5.500" y=".6" width="5" height="1.800" rx=".6" fill="#dcdcdc"/><path d="M4.800 4.300h4.600l2 2v7.500h-6.600z" fill="#f3f3f3" stroke="#c9c9c9" stroke-width=".5"/><path d="M5.800 7.300h3.500M5.800 9.300h2.500M5.800 11.300h3.500" stroke="#d3d3d3" stroke-width=".9"/></svg>
<svg class="ic" style="left:279px;top:7px;width:16px;height:16px" viewBox="0 0 16 16"><path d="M1.200 6.300l5.200-5v3.200c4.500 0 7.800 2 7.800 5.600 0 2.500-2 4.300-5 4.300-1 0-1.600-.6-1.600-1.500 0-.8.500-1.300 1.300-1.500 1.300-.3 1.900-.8 1.900-1.700 0-1.300-1.700-1.800-4.400-1.800v3.400z" fill="#b4b4b4"/></svg>
<svg class="ic" style="left:304px;top:7px;width:16px;height:16px" viewBox="0 0 16 16"><path d="M14.800 6.300l-5.200-5v3.200c-4.500 0-7.800 2-7.800 5.600 0 2.500 2 4.300 5 4.300 1 0 1.600-.6 1.600-1.500 0-.8-.5-1.300-1.300-1.500-1.300-.3-1.900-.8-1.900-1.700 0-1.300 1.700-1.800 4.400-1.800v3.400z" fill="#b4b4b4"/></svg>
<svg class="ic" style="left:138px;top:13px;width:8px;height:5px" viewBox="0 0 8 5"><path d="M0 .3h8l-4 4.200z" fill="#c8c8c8"/></svg>
<svg class="hd" style="left:333px;top:7px" viewBox="0 0 5 18"><rect x="0" y="0" width="1" height="1.200" fill="#bcbcbc"/><rect x="0" y="3" width="1" height="1.200" fill="#bcbcbc"/><rect x="0" y="6" width="1" height="1.200" fill="#bcbcbc"/><rect x="0" y="9" width="1" height="1.200" fill="#bcbcbc"/><rect x="0" y="12" width="1" height="1.200" fill="#bcbcbc"/><rect x="0" y="15" width="1" height="1.200" fill="#bcbcbc"/><rect x="3" y="0" width="1" height="1.200" fill="#bcbcbc"/><rect x="3" y="3" width="1" height="1.200" fill="#bcbcbc"/><rect x="3" y="6" width="1" height="1.200" fill="#bcbcbc"/><rect x="3" y="9" width="1" height="1.200" fill="#bcbcbc"/><rect x="3" y="12" width="1" height="1.200" fill="#bcbcbc"/><rect x="3" y="15" width="1" height="1.200" fill="#bcbcbc"/></svg>
<svg class="ic" style="left:344px;top:7px;width:16px;height:16px" viewBox="0 0 16 16"><path d="M.6 6.5l3-3.600h10.6v7.200h-10.6z" fill="#fbe24d" stroke="#e2c327" stroke-width=".8" stroke-linejoin="round"/><text x="3.700" y="8.7" font-family="DejaVu Sans" font-weight="bold" font-size="5.9" fill="#333" textLength="8.6" lengthAdjust="spacingAndGlyphs">abc</text></svg>
<svg class="ic" style="left:369px;top:7px;width:16px;height:16px" viewBox="0 0 16 16"><circle cx="6.800" cy="5.700" r="4.800" fill="#18a04a"/><path d="M6.800 5.700l-4-2.600a4.800 4.800 0 0 1 8 0z" fill="#f6cc15"/><path d="M6.800 5.700l4-2.600a4.800 4.800 0 0 1-4 7.400z" fill="#c5161d"/><rect x="7.900" y="11" width="2.600" height="4.800" rx=".5" fill="#f6cc15"/><rect x="10.300" y="7" width="2.900" height="8.800" rx=".6" fill="#18a04a"/><rect x="13.200" y="11.200" width="2.800" height="4.600" rx=".6" fill="#c5161d"/></svg>
<svg class="ic" style="left:395px;top:7px;width:16px;height:16px" viewBox="0 0 16 16"><rect x=".6" y="1.500" width="15.200" height="13.300" fill="#dfeafa" stroke="#5b96e6" stroke-width="1.100"/><path d="M.6 6.2l3-3.600h9.6v7.200h-9.6z" fill="#fbe24d" stroke="#e2c327" stroke-width=".8" stroke-linejoin="round"/><text x="3.700" y="8.4" font-family="DejaVu Sans" font-weight="bold" font-size="6.2" fill="#222" textLength="5.6" lengthAdjust="spacingAndGlyphs">ab</text><path d="M11.400 6l.6 4.500" stroke="#ddd" stroke-width="1.300"/><circle cx="12.600" cy="11.900" r="3" fill="#b3262b"/><circle cx="11.800" cy="11" r=".8" fill="#d9686c"/></svg>
<svg class="ic" style="left:419px;top:7px;width:16px;height:16px" viewBox="0 0 16 16"><g transform="translate(.8 0)"><path d="M.6 6.5l3-3.600h10.0v7.200h-10.0z" fill="#f4f4f4" stroke="#c8c8c8" stroke-width=".8" stroke-linejoin="round"/><text x="3.700" y="8.7" font-family="DejaVu Sans" font-weight="normal" font-size="6" fill="#858585" textLength="5.6" lengthAdjust="spacingAndGlyphs">ab</text></g><path d="M11.700 6l.4 3.500" stroke="#ccc" stroke-width="1.100"/><circle cx="12.800" cy="12.200" r="3" fill="#8e8e8e"/><circle cx="12" cy="11.300" r=".8" fill="#aaa"/></svg>
<svg class="ic" style="left:444px;top:7px;width:16px;height:16px" viewBox="0 0 16 16"><g transform="translate(.8 0)"><path d="M.6 6.5l3-3.600h10.0v7.200h-10.0z" fill="#f4f4f4" stroke="#c8c8c8" stroke-width=".8" stroke-linejoin="round"/><text x="3.700" y="8.7" font-family="DejaVu Sans" font-weight="normal" font-size="6" fill="#858585" textLength="8.6" lengthAdjust="spacingAndGlyphs">abc</text></g><path d="M6.500 13c2.200-3 6.400-3 9.200 0-2.800 2.700-7 2.700-9.200 0z" fill="#f4f4f4" stroke="#999" stroke-width=".7"/><circle cx="11.100" cy="12.900" r="1.500" fill="#777"/><path d="M6.800 11.300c2.500-2 6.300-2 8.800 0" fill="none" stroke="#bbb" stroke-width=".6"/></svg>
<svg class="ic" style="left:469px;top:7px;width:16px;height:16px" viewBox="0 0 16 16"><g transform="translate(.8 0)"><path d="M.6 6.5l3-3.600h10.0v7.200h-10.0z" fill="#f4f4f4" stroke="#c8c8c8" stroke-width=".8" stroke-linejoin="round"/><text x="3.700" y="8.7" font-family="DejaVu Sans" font-weight="normal" font-size="6" fill="#858585" textLength="8.6" lengthAdjust="spacingAndGlyphs">abc</text></g><rect x="9.800" y="9.300" width="6.700" height="6.700" rx="1" fill="#a6a6a6"/><path d="M10.500 12.600h3v-1.900l2.600 1.900-2.600 1.900v-1.900" fill="#fff" stroke="#fff" stroke-width="1"/></svg>
<svg class="ic" style="left:494px;top:7px;width:16px;height:16px" viewBox="0 0 16 16"><g transform="translate(.8 0)"><path d="M.6 6.5l3-3.600h10.0v7.200h-10.0z" fill="#f4f4f4" stroke="#c8c8c8" stroke-width=".8" stroke-linejoin="round"/><text x="3.700" y="8.7" font-family="DejaVu Sans" font-weight="normal" font-size="6" fill="#858585" textLength="8.6" lengthAdjust="spacingAndGlyphs">abc</text></g><rect x="9.800" y="9.300" width="6.700" height="6.700" rx="1" fill="#9c9c9c"/><path d="M11.500 11.300l3.300 3.300" stroke="#fff" stroke-width=".9"/><path d="M11.100 13.900a2.300 2.300 0 0 1 1.700-3.400M15.200 12.300a2.300 2.300 0 0 1-1.600 2.700" fill="none" stroke="#fff" stroke-width=".8"/></svg>
<svg class="ic" style="left:519px;top:7px;width:16px;height:16px" viewBox="0 0 16 16"><g transform="translate(.8 0)"><path d="M.6 6.5l3-3.600h10.0v7.200h-10.0z" fill="#f4f4f4" stroke="#c8c8c8" stroke-width=".8" stroke-linejoin="round"/><text x="3.700" y="8.7" font-family="DejaVu Sans" font-weight="normal" font-size="6" fill="#858585" textLength="8.6" lengthAdjust="spacingAndGlyphs">abc</text></g><rect x="9.800" y="9.300" width="6.700" height="6.700" rx="1" fill="#c4c4c4"/><path d="M11 15l4-4.300" stroke="#fff" stroke-width="1.800" stroke-linecap="round"/></svg>
<svg class="hd" style="left:549px;top:7px" viewBox="0 0 5 18"><rect x="0" y="0" width="1" height="1.200" fill="#bcbcbc"/><rect x="0" y="3" width="1" height="1.200" fill="#bcbcbc"/><rect x="0" y="6" width="1" height="1.200" fill="#bcbcbc"/><rect x="0" y="9" width="1" height="1.200" fill="#bcbcbc"/><rect x="0" y="12" width="1" height="1.200" fill="#bcbcbc"/><rect x="0" y="15" width="1" height="1.200" fill="#bcbcbc"/><rect x="3" y="0" width="1" height="1.200" fill="#bcbcbc"/><rect x="3" y="3" width="1" height="1.200" fill="#bcbcbc"/><rect x="3" y="6" width="1" height="1.200" fill="#bcbcbc"/><rect x="3" y="9" width="1" height="1.200" fill="#bcbcbc"/><rect x="3" y="12" width="1" height="1.200" fill="#bcbcbc"/><rect x="3" y="15" width="1" height="1.200" fill="#bcbcbc"/></svg>
<svg class="ic" style="left:561px;top:7px;width:16px;height:16px" viewBox="0 0 16 16"><defs><linearGradient id="gg1" x1="0" x2="1"><stop offset="0" stop-color="#5e9ce4"/><stop offset=".13" stop-color="#a9caf0"/><stop offset=".3" stop-color="#e6effa"/><stop offset=".37" stop-color="#4391e2"/><stop offset=".5" stop-color="#62a8ec"/><stop offset=".63" stop-color="#4391e2"/><stop offset=".7" stop-color="#e6effa"/><stop offset=".87" stop-color="#a9caf0"/><stop offset="1" stop-color="#5e9ce4"/></linearGradient></defs><ellipse cx="8" cy="6.900" rx="8" ry="7" fill="url(#gg1)"/><ellipse cx="8" cy="6.900" rx="7.600" ry="6.600" fill="none" stroke="#5a96dc" stroke-width=".8"/><path d="M1.600 4.600c.9-.7 1.900-.6 2.500-.2v5c-.7.500-1.700.5-2.500-.2-.5-1.500-.5-3.100 0-4.600z" fill="#7d7d7d"/><path d="M14.400 4.600c-.9-.7-1.900-.6-2.600-.2v5c.7.500 1.700.5 2.600-.2.500-1.500.5-3.100 0-4.600z" fill="#6f6f6f"/><path d="M6.500 1.900c1-.7 2.100-.7 3 0l-.4 1.400h-2.200zM6.500 11.900c1 .7 2.100.7 3 0l-.4-1.400h-2.200z" fill="#808080"/><path d="M1.700 7h2.400M11.900 7h2.500" stroke="#c4c4c4" stroke-width=".9"/><path d="M5.600 5h4.800M5.600 7h4.800M5.600 9h4.800" stroke="#9ac8f4" stroke-width=".5"/><rect x="10" y="9.900" width="6" height="6" rx=".8" fill="#3a7f3a"/><path d="M11 13c0-1.600 2.600-2 3.400-.6l.7-.7v2.300h-2.300l.8-.8c-.5-.7-1.700-.5-1.700.4z" fill="#fff"/><path d="M12.800 13.800h5.200l-2.600 2.300z" fill="#1a1a1a"/></svg>
<svg class="ic" style="left:586px;top:7px;width:16px;height:16px" viewBox="0 0 16 16"><defs><linearGradient id="gg2" x1="0" x2="1"><stop offset="0" stop-color="#5e9ce4"/><stop offset=".13" stop-color="#a9caf0"/><stop offset=".3" stop-color="#e6effa"/><stop offset=".37" stop-color="#4391e2"/><stop offset=".5" stop-color="#62a8ec"/><stop offset=".63" stop-color="#4391e2"/><stop offset=".7" stop-color="#e6effa"/><stop offset=".87" stop-color="#a9caf0"/><stop offset="1" stop-color="#5e9ce4"/></linearGradient></defs><ellipse cx="8" cy="6.900" rx="8" ry="7" fill="url(#gg2)"/><ellipse cx="8" cy="6.900" rx="7.600" ry="6.600" fill="none" stroke="#5a96dc" stroke-width=".8"/><path d="M1.600 4.600c.9-.7 1.900-.6 2.500-.2v5c-.7.500-1.700.5-2.500-.2-.5-1.500-.5-3.100 0-4.600z" fill="#7d7d7d"/><path d="M14.400 4.600c-.9-.7-1.900-.6-2.600-.2v5c.7.500 1.700.5 2.600-.2.500-1.500.5-3.100 0-4.600z" fill="#6f6f6f"/><path d="M6.500 1.900c1-.7 2.100-.7 3 0l-.4 1.400h-2.200zM6.500 11.900c1 .7 2.100.7 3 0l-.4-1.400h-2.200z" fill="#808080"/><path d="M1.700 7h2.400M11.900 7h2.500" stroke="#c4c4c4" stroke-width=".9"/><path d="M5.600 5h4.800M5.600 7h4.800M5.600 9h4.800" stroke="#9ac8f4" stroke-width=".5"/><rect x="10" y="9.900" width="6" height="6" rx=".8" fill="#3a7f3a"/><circle cx="12.600" cy="12.400" r="1.500" fill="none" stroke="#fff" stroke-width=".9"/><path d="M13.600 13.500l1.600 1.700" stroke="#fff" stroke-width="1"/></svg>
<svg class="ic" style="left:611px;top:7px;width:16px;height:16px" viewBox="0 0 16 16"><circle cx="7.700" cy="7" r="7" fill="#6b98d0"/><path d="M2 4c1.500-1.500 3-1 3.500 0s-1 2-.5 3 2 1 1.500 2.500-2.500 1-3.500 0zM8 1.500c2-1 4 0 5 1.500s0 2.500-1.500 2-1-1.500-2.500-1.500zM10 7c1.500-.5 3 0 3.500 1.500s-1 3-2 2.500-2-2.500-1.500-4zM5.500 1.500l2 .5-1 2-1.500-1z" fill="#2f5a94" opacity=".85"/><path d="M3 9l2-3 1.500 2M8.500 5l1.500 1.500" stroke="#c5daf2" stroke-width=".7" fill="none"/><circle cx="7.700" cy="7" r="6.800" fill="none" stroke="#4a78b5" stroke-width=".6"/><path d="M5 8l-3 4.500h4.700l.8-2.300h.9l.8 2.300h4.700l-3-4.500z" fill="#0a0a0a"/><ellipse cx="4.400" cy="13.700" rx="2.700" ry="1.700" fill="#eef4fb" stroke="#0a0a0a" stroke-width="1.100"/><ellipse cx="11.400" cy="13.700" rx="2.700" ry="1.700" fill="#eef4fb" stroke="#0a0a0a" stroke-width="1.100"/></svg>
<svg class="hd" style="left:640px;top:7px" viewBox="0 0 5 18"><rect x="0" y="0" width="1" height="1.200" fill="#bcbcbc"/><rect x="0" y="3" width="1" height="1.200" fill="#bcbcbc"/><rect x="0" y="6" width="1" height="1.200" fill="#bcbcbc"/><rect x="0" y="9" width="1" height="1.200" fill="#bcbcbc"/><rect x="0" y="12" width="1" height="1.200" fill="#bcbcbc"/><rect x="0" y="15" width="1" height="1.200" fill="#bcbcbc"/><rect x="3" y="0" width="1" height="1.200" fill="#bcbcbc"/><rect x="3" y="3" width="1" height="1.200" fill="#bcbcbc"/><rect x="3" y="6" width="1" height="1.200" fill="#bcbcbc"/><rect x="3" y="9" width="1" height="1.200" fill="#bcbcbc"/><rect x="3" y="12" width="1" height="1.200" fill="#bcbcbc"/><rect x="3" y="15" width="1" height="1.200" fill="#bcbcbc"/></svg>
<svg class="ic" style="left:652px;top:7px;width:16px;height:16px" viewBox="0 0 16 16"><path d="M7 .9c-2.500 0-2.800 1.100-2.800 2.100v1.600h3.300v.6h-4.900c-1.500 0-2.100 1.400-2.100 3s.6 2.900 2 2.900h1.300v-1.900c0-1.300 1-2.200 2.300-2.200h3.300c1 0 1.900-.8 1.900-1.900v-2.100c0-1.300-1.300-2.100-4.300-2.100z" fill="#3674a8"/><circle cx="5.500" cy="2.500" r=".6" fill="#cfe0ef"/><path d="M9 15.100c2.500 0 2.800-1.100 2.800-2.100v-1.600h-3.300v-.6h4.900c1.500 0 2.100-1.400 2.100-3s-.6-2.900-2-2.900h-1.300v1.900c0 1.300-1 2.200-2.300 2.200h-3.300c-1 0-1.900.8-1.900 1.900v2.100c0 1.300 1.300 2.100 4.300 2.100z" fill="#f7c93e"/><path d="M11.300 11.800l3.800 1.300-3.800 1.500" fill="none" stroke="#333" stroke-width=".9"/></svg>
<svg class="ic" style="left:677px;top:7px;width:16px;height:16px" viewBox="0 0 16 16"><defs><linearGradient id="rg" x1="0" y1="0" x2="1" y2="1"><stop offset="0" stop-color="#86c0f4"/><stop offset=".5" stop-color="#4b8fe6"/><stop offset="1" stop-color="#1f4fd0"/></linearGradient></defs><ellipse cx="8.600" cy="14.700" rx="5" ry=".7" fill="#aaa" opacity=".7"/><path d="M8.100 14.800v-4.300a2.500 2.500 0 1 0-2.400-2.400h.9l-3.400 3.100-3-3.100h1.200a6.600 6.600 0 1 1 6.700 6.700z" fill="url(#rg)"/></svg>
<svg class="ic" style="left:699px;top:13px;width:8px;height:5px" viewBox="0 0 8 5"><path d="M0 .3h8l-4 4.200z" fill="#4a4a4a"/></svg>
<svg class="hd" style="left:718px;top:7px" viewBox="0 0 5 18"><rect x="0" y="0" width="1" height="1.200" fill="#bcbcbc"/><rect x="0" y="3" width="1" height="1.200" fill="#bcbcbc"/><rect x="0" y="6" width="1" height="1.200" fill="#bcbcbc"/><rect x="0" y="9" width="1" height="1.200" fill="#bcbcbc"/><rect x="0" y="12" width="1" height="1.200" fill="#bcbcbc"/><rect x="0" y="15" width="1" height="1.200" fill="#bcbcbc"/><rect x="3" y="0" width="1" height="1.200" fill="#bcbcbc"/><rect x="3" y="3" width="1" height="1.200" fill="#bcbcbc"/><rect x="3" y="6" width="1" height="1.200" fill="#bcbcbc"/><rect x="3" y="9" width="1" height="1.200" fill="#bcbcbc"/><rect x="3" y="12" width="1" height="1.200" fill="#bcbcbc"/><rect x="3" y="15" width="1" height="1.200" fill="#bcbcbc"/></svg>
<svg class="ic" style="left:730px;top:7px;width:16px;height:16px" viewBox="0 0 16 16"><rect x="1" y=".8" width="13.500" height="14.200" rx=".8" fill="#6a97c8" stroke="#3c4f66" stroke-width=".7"/><path d="M1.400 .9h3.300v14h-3.300z" fill="#2f4052"/><path d="M1 14.500h13.500" stroke="#2f4052" stroke-width=".9"/><text x="7" y="11.500" font-family="DejaVu Sans" font-size="10" fill="#eaf1fa">?</text></svg>
<svg class="hd" style="left:759px;top:7px" viewBox="0 0 5 18"><rect x="0" y="0" width="1" height="1.200" fill="#bcbcbc"/><rect x="0" y="3" width="1" height="1.200" fill="#bcbcbc"/><rect x="0" y="6" width="1" height="1.200" fill="#bcbcbc"/><rect x="0" y="9" width="1" height="1.200" fill="#bcbcbc"/><rect x="0" y="12" width="1" height="1.200" fill="#bcbcbc"/><rect x="0" y="15" width="1" height="1.200" fill="#bcbcbc"/><rect x="3" y="0" width="1" height="1.200" fill="#bcbcbc"/><rect x="3" y="3" width="1" height="1.200" fill="#bcbcbc"/><rect x="3" y="6" width="1" height="1.200" fill="#bcbcbc"/><rect x="3" y="9" width="1" height="1.200" fill="#bcbcbc"/><rect x="3" y="12" width="1" height="1.200" fill="#bcbcbc"/><rect x="3" y="15" width="1" height="1.200" fill="#bcbcbc"/></svg>
<svg class="hd" style="left:776px;top:7px" viewBox="0 0 5 18"><rect x="0" y="0" width="1" height="1.200" fill="#bcbcbc"/><rect x="0" y="3" width="1" height="1.200" fill="#bcbcbc"/><rect x="0" y="6" width="1" height="1.200" fill="#bcbcbc"/><rect x="0" y="9" width="1" height="1.200" fill="#bcbcbc"/><rect x="0" y="12" width="1" height="1.200" fill="#bcbcbc"/><rect x="0" y="15" width="1" height="1.200" fill="#bcbcbc"/><rect x="3" y="0" width="1" height="1.200" fill="#bcbcbc"/><rect x="3" y="3" width="1" height="1.200" fill="#bcbcbc"/><rect x="3" y="6" width="1" height="1.200" fill="#bcbcbc"/><rect x="3" y="9" width="1" height="1.200" fill="#bcbcbc"/><rect x="3" y="12" width="1" height="1.200" fill="#bcbcbc"/><rect x="3" y="15" width="1" height="1.200" fill="#bcbcbc"/></svg>
<svg class="ic" style="left:787px;top:7px;width:16px;height:16px" viewBox="0 0 16 16"><path d="M1 1c2-.8 4 .5 6.500-.3s4.500-.5 6.500 .3c.8 2-.3 4 .3 6.500s.3 4.500-.6 6.500c-2 .8-4-.3-6.500 .3s-4.500 .3-6.200-.6c-.8-2 .3-4-.3-6.500s-.3-4.200 .3-6.200z" fill="#b9e3a4"/><path d="M2 3c3 1 4 4 8 3M3 12c2-3 5-2 7-6" stroke="#e9f1c8" stroke-width="1" fill="none"/><path d="M6 6h4v3h-2v3" fill="none" stroke="#9db6ee" stroke-width="1.600"/><circle cx="12" cy="11.500" r="2.200" fill="none" stroke="#a89a1c" stroke-width="1.500"/><path d="M13.500 13l1.200 2" stroke="#a89a1c" stroke-width="1.500"/><circle cx="14.500" cy="8.800" r=".9" fill="#0e9a1d"/><circle cx="9.800" cy="13.500" r=".9" fill="#0e9a1d"/></svg>
<svg class="ic" style="left:813px;top:7px;width:16px;height:16px" viewBox="0 0 16 16"><rect x=".8" y="1.300" width="14" height="13.700" fill="#f7e9a9"/><path d="M.8 1.300h4.500v3.500c-1.500 1-3 1-4.500 0z" fill="#4fc04f"/><path d="M8 1.300c2 2 1 6 3 9s3 3 3.800 4.700h-3c-2-3-4-6-5-13.700z" fill="#4a8aea"/><path d="M.8 14c3-2 6-1 8 1z" fill="#4a8aea"/><path d="M2.500 7h4M3 9.500h3" stroke="#e8a7b4" stroke-width="1.100"/><path d="M13.300 0l1.500 1-5 9-1.700-.9z" fill="#8c4a1c"/><path d="M8.100 9.100l1.700 .9-2 2.200z" fill="#2a1a0c"/><path d="M12.800 4h2v4.500h-1.500z" fill="#f5df7a"/></svg>
<svg class="hd" style="left:842px;top:7px" viewBox="0 0 5 18"><rect x="0" y="0" width="1" height="1.200" fill="#bcbcbc"/><rect x="0" y="3" width="1" height="1.200" fill="#bcbcbc"/><rect x="0" y="6" width="1" height="1.200" fill="#bcbcbc"/><rect x="0" y="9" width="1" height="1.200" fill="#bcbcbc"/><rect x="0" y="12" width="1" height="1.200" fill="#bcbcbc"/><rect x="0" y="15" width="1" height="1.200" fill="#bcbcbc"/><rect x="3" y="0" width="1" height="1.200" fill="#bcbcbc"/><rect x="3" y="3" width="1" height="1.200" fill="#bcbcbc"/><rect x="3" y="6" width="1" height="1.200" fill="#bcbcbc"/><rect x="3" y="9" width="1" height="1.200" fill="#bcbcbc"/><rect x="3" y="12" width="1" height="1.200" fill="#bcbcbc"/><rect x="3" y="15" width="1" height="1.200" fill="#bcbcbc"/></svg>
<svg class="ic" style="left:854px;top:7px;width:16px;height:16px" viewBox="0 0 16 16"><path d="M1.300 1v13.300h13.200" fill="none" stroke="#bdbdbd" stroke-width=".8"/><path d="M1.300 3.500h-.8M1.300 6.500h-.8M1.300 9.500h-.8M1.300 12.300h-.8M4.300 14.300v.8M7.300 14.300v.8M10.300 14.300v.8M13.300 14.300v.8" stroke="#c9c9c9" stroke-width=".6"/><path d="M2.800 11.500c1.500-1.300 2.500-.8 4-2.300" fill="none" stroke="#d22ccf" stroke-width="1.200"/><path d="M6.600 9.400c1.800-1.500 1.800-4.800 3.800-5.200 1.300-.3 2-.2 3-.6" fill="none" stroke="#d2544a" stroke-width="1.100"/><path d="M2.800 12.500c2 .5 3.500 0 5-1.500s3-1 5.300-.8" fill="none" stroke="#7aa8f5" stroke-width=".9"/></svg></div>
  <div id="ldock"><svg class="abs" style="left:9px;top:5px;width:17px;height:5px" viewBox="0 0 17 5"><rect x="0" y="0" width="1.200" height="1" fill="#b9b9b9"/><rect x="3" y="0" width="1.200" height="1" fill="#b9b9b9"/><rect x="6" y="0" width="1.200" height="1" fill="#b9b9b9"/><rect x="9" y="0" width="1.200" height="1" fill="#b9b9b9"/><rect x="12" y="0" width="1.200" height="1" fill="#b9b9b9"/><rect x="15" y="0" width="1.200" height="1" fill="#b9b9b9"/><rect x="0" y="3" width="1.200" height="1" fill="#b9b9b9"/><rect x="3" y="3" width="1.200" height="1" fill="#b9b9b9"/><rect x="6" y="3" width="1.200" height="1" fill="#b9b9b9"/><rect x="9" y="3" width="1.200" height="1" fill="#b9b9b9"/><rect x="12" y="3" width="1.200" height="1" fill="#b9b9b9"/><rect x="15" y="3" width="1.200" height="1" fill="#b9b9b9"/></svg>
<svg class="ic" style="left:8px;top:15px;width:16px;height:16px" viewBox="0 0 16 16"><path d="M.2 6.600l6.800-2 2.800 8.300-6.300 2.600z" fill="#d8683c"/><path d="M2.100 3.100l7-1.200 .6 10.500-7.200.4z" fill="#f2c12e"/><path d="M7.100 1l8.600 2.500-1.600 7.600-8.700-2z" fill="#6a97c8" stroke="#4f7fb4" stroke-width=".4"/><rect x="10" y="10.8" width="6" height="6" rx="1" fill="#5a9c57"/><circle cx="13.0" cy="13.8" r="1.98" fill="#fff"/><circle cx="13.0" cy="13.8" r="0.72" fill="#cfe6cc"/></svg>
<svg class="ic" style="left:8px;top:40px;width:16px;height:16px" viewBox="0 0 16 16"><circle cx="8.800" cy="4.700" r="5.200" fill="#7da6d8"/><path d="M4.300 3.200l1.800-1.600 1.500 .6-.4 1.500 1.300 1.300-1 1.700-1.300-.5-.8 1.300-1.300-1.500zM9.800 .8l2 .5 1.600 1.800-.3 1.900-1.500 .3-.8-1.500-1.300-.4zM9.500 5.500l1.500 .5 .3 1.800-1.300 .9z" fill="#27507f"/><path d="M6 1.200l3 6.500M4.500 6l6-4" stroke="#b9d2ee" stroke-width=".6"/><path d="M.1 4.500l8.400 4.400v6.700l-8.400-4.700z" fill="#e0b010" stroke="#b88c08" stroke-width=".4"/><path d="M8.500 8.900l7.300-4.400v8.900l-7.300 2.200z" fill="#fdf28a" stroke="#d7c23a" stroke-width=".4"/><rect x="10.5" y="10.3" width="5.3" height="5.3" rx="1" fill="#f5e6a3" stroke="#d4a90f" stroke-width="1.100"/></svg>
<svg class="ic" style="left:8px;top:64px;width:16px;height:16px" viewBox="0 0 16 16"><path d="M2 2l4 11 4-9.700 3.300-1" fill="none" stroke="#555" stroke-width="1"/><g fill="#fff" stroke="#555" stroke-width=".7"><circle cx="2" cy="2" r="1.100"/><circle cx="6" cy="13" r="1.100"/><circle cx="10" cy="3.300" r="1.100"/><circle cx="13.500" cy="2.300" r="1.100"/></g><rect x="10.2" y="10.2" width="5.5" height="5.5" rx="1" fill="#f5e6a3" stroke="#d4a90f" stroke-width="1.100"/></svg>
<svg class="ic" style="left:8px;top:88px;width:16px;height:16px" viewBox="0 0 16 16"><path d="M1.800 12c.5-4.500 5.500-10 12.900-11.500-.8 5-4.800 9.800-10.700 11z" fill="#7aa3d3" stroke="#2f527f" stroke-width=".7" stroke-linejoin="round"/><path d="M.6 15.600c2-5.200 6-9.300 11.400-12.400" fill="none" stroke="#2f527f" stroke-width=".8"/><path d="M3.500 10.500c2.500-3.500 5.500-6 9-7.800" fill="none" stroke="#c9dcf1" stroke-width=".7"/><rect x="10.2" y="10.2" width="5.5" height="5.5" rx="1" fill="#f5e6a3" stroke="#d4a90f" stroke-width="1.100"/></svg>
<svg class="ic" style="left:8px;top:112px;width:16px;height:16px" viewBox="0 0 16 16"><path d="M4.200 1v12.600M6.300 1v12.600M8.400 1v12.600M10.500 1v12.600M12.600 1v12.600" stroke="#3f6fa8" stroke-width=".9"/><rect x="2.200" y="4.500" width="12.400" height="6.600" rx=".8" fill="#6a97c8" stroke="#4a7ab2" stroke-width=".7"/><rect x="10.2" y="10.2" width="5.5" height="5.5" rx="1" fill="#f5e6a3" stroke="#d4a90f" stroke-width="1.100"/></svg></div>
  <div id="layers"><div class="abs" style="left:36px;top:118px;font-size:12px;line-height:15px">Layers</div>
<svg class="ic" style="left:265px;top:119px;width:11px;height:11px" viewBox="0 0 11 11"><rect x=".5" y=".5" width="10" height="10" rx="2" fill="none" stroke="#666" stroke-width="1"/><rect x="4.500" y="2.500" width="4" height="4" rx=".8" fill="#efefef" stroke="#666" stroke-width=".9"/><rect x="2.500" y="4.500" width="4" height="4" rx=".8" fill="#efefef" stroke="#666" stroke-width=".9"/></svg>
<svg class="ic" style="left:279px;top:119px;width:11px;height:11px" viewBox="0 0 11 11"><rect x=".5" y=".5" width="10" height="10" rx="2" fill="none" stroke="#666" stroke-width="1"/><path d="M2.800 2.800l5.400 5.400M8.200 2.800l-5.400 5.400" stroke="#4a4a4a" stroke-width="2"/></svg>
<svg class="ic" style="left:40px;top:141px;width:16px;height:16px" viewBox="0 0 16 16"><path d="M3.300 4.200l6.500 2.500-1.800 3.500-6.500-2.700z" fill="#f4df3a"/><path d="M2.400 6.500l6.300 2.600-1.200 2.600-6.300-2.800z" fill="#7ca6da"/><path d="M1.400 8.800l6.200 2.800-1.200 2.400-6-3.200z" fill="#e02a2a"/><path d="M15 2.300l-5.300 6" stroke="#c58a2e" stroke-width="1.600"/><path d="M6.500 8.700l3.200-2.300 2.300 3.300-2.900 4.500-4.600-2.700z" fill="#dcae6a" stroke="#c9954a" stroke-width=".5"/></svg>
<svg class="ic" style="left:65px;top:141px;width:16px;height:16px" viewBox="0 0 16 16"><path d="M1 10.500v4h6" fill="none" stroke="#666" stroke-width=".9"/><path d="M3.200 6v7h8.800v-7z" fill="#f3f3f3" stroke="#666" stroke-width=".9"/><path d="M5 3h8.300v9" fill="none" stroke="#666" stroke-width=".9"/><path d="M7 10v-7.200a1.500 1.500 0 0 1 3 0v7.500" fill="none" stroke="#3769a8" stroke-width="1"/><rect x="9.3" y="9.4" width="6.4" height="6.4" rx="1" fill="#5a9c57"/><circle cx="12.5" cy="12.600000000000001" r="2.11" fill="#fff"/><circle cx="12.5" cy="12.600000000000001" r="0.77" fill="#cfe6cc"/></svg>
<svg class="ic" style="left:90px;top:141px;width:16px;height:16px" viewBox="0 0 16 16"><path d="M.4 8.300c4-6 11.500-5.500 15.600 .8-4.500 5.300-11.800 4.800-15.600-.8z" fill="#f7f7f7" stroke="#a2a2a2" stroke-width=".7"/><path d="M.8 5.800c4.300-3.500 9.800-3.500 13.500-.6" fill="none" stroke="#b5b5b5" stroke-width=".6"/><circle cx="7.900" cy="7.900" r="3.500" fill="#7aa2d8" stroke="#5f88c2" stroke-width=".4"/><circle cx="7.900" cy="7.700" r="1.400" fill="#111"/><circle cx="7.200" cy="7" r=".5" fill="#fff"/><path d="M12.300 13.300h5.600l-2.800 2.800z" fill="#555"/></svg>
<svg class="ic" style="left:115px;top:141px;width:16px;height:16px" viewBox="0 0 16 16"><path d="M1 .9h14l-4.800 7v7.800l-4.400-1.900v-5.900z" fill="#6a97c8" stroke="#4f7fb4" stroke-width=".6" stroke-linejoin="round"/><path d="M2 2h12" stroke="#f5e04a" stroke-width="1.900"/></svg>
<svg class="ic" style="left:141px;top:141px;width:16px;height:16px" viewBox="0 0 16 16"><text x=".5" y="10.700" font-family="DejaVu Serif" font-size="18.500" fill="#5b2a73">ε</text><path d="M7.300 8.200h7.600l-1.900 3.300v4.200h-3.800v-4.200z" fill="#a3a3a3"/><path d="M8 8.800h2l1 2.700v3.800h-1v-3.800z" fill="#e6e6e6"/><path d="M7.300 8.200h7.600v1.100h-7.600z" fill="#d6d6d6"/></svg>
<svg class="ic" style="left:178px;top:141px;width:16px;height:16px" viewBox="0 0 16 16"><path d="M0 2.300h14M1.800 2.300v11.500M1.800 6.500h2.500M1.800 12.600h2.500" fill="none" stroke="#a5a5a5" stroke-width=".8"/><rect x="4.300" y="5" width="3" height="3" fill="#fff" stroke="#f39a12" stroke-width="1"/><rect x="4.300" y="11.100" width="3" height="3" fill="#fff" stroke="#f39a12" stroke-width="1"/><path d="M8.500 1.300h3v8.500h3.200l-4.700 5-4.700-5h3.200z" fill="#6a97c8" stroke="#27496e" stroke-width=".7" stroke-linejoin="round"/></svg>
<svg class="ic" style="left:203px;top:141px;width:16px;height:16px" viewBox="0 0 16 16"><path d="M0 2.300h14M1.800 2.300v11.500M1.800 6.500h2.500M1.800 12.600h2.500" fill="none" stroke="#a5a5a5" stroke-width=".8"/><rect x="4.300" y="5" width="3" height="3" fill="#fff" stroke="#f39a12" stroke-width="1"/><rect x="4.300" y="11.100" width="3" height="3" fill="#fff" stroke="#f39a12" stroke-width="1"/><path d="M8.500 14.300h3v-8.500h3.200l-4.700-5-4.700 5h3.200z" fill="#6a97c8" stroke="#27496e" stroke-width=".7" stroke-linejoin="round"/></svg>
<svg class="ic" style="left:227px;top:141px;width:16px;height:16px" viewBox="0 0 16 16"><rect x="1.200" y="1.500" width="11.500" height="11.500" fill="#f4f4f4" stroke="#7c7c7c" stroke-width=".9"/><rect x="9.200" y="10.300" width="6" height="5" rx="1.200" fill="#e63946"/><path d="M10.500 12.800h3.400" stroke="#fff" stroke-width="1.300"/></svg>
<svg class="ic" style="left:162px;top:147px;width:8px;height:5px" viewBox="0 0 8 5"><path d="M0 .3h8l-4 4.200z" fill="#4a4a4a"/></svg>
<div id="tree"><div class="row" style="top:0;background:#308cc6"><div class="cb"><svg class="abs" style="left:1px;top:1px;width:10px;height:10px" viewBox="0 0 10 10"><path d="M1.300 5.200l2.600 3.300 4.600-7.500" fill="none" stroke="#000" stroke-width="1.600"/></svg></div>
<svg class="abs" style="left:43px;top:1px;width:16px;height:16px" viewBox="0 0 16 16"><circle cx="7.800" cy="8.100" r="4.300" fill="#bcdcf0" stroke="#1f2a33" stroke-width=".9"/></svg>
<div class="abs" style="left:63px;top:0;width:194px;height:18px;background:#3390c9;border-left:1px solid #4a9ad0"></div>
<div class="lbl" style="color:#fff;font-weight:bold;text-decoration:underline;text-underline-offset:1.500px">Random points</div><svg class="ic" style="left:242px;top:3px;width:14px;height:12px" viewBox="0 0 14 12"><path d="M3 0v12M6 0v12M8.800 0v12M11.600 0v12" stroke="#2c5d86" stroke-width="1"/><rect x="1" y="2.700" width="12.700" height="6.600" rx="1.300" fill="#3390c9" stroke="#2c5d86" stroke-width="1"/></svg></div><div class="row" style="top:18px"><div class="cb"><svg class="abs" style="left:1px;top:1px;width:10px;height:10px" viewBox="0 0 10 10"><path d="M1.300 5.200l2.600 3.300 4.600-7.500" fill="none" stroke="#000" stroke-width="1.600"/></svg></div><div class="abs" style="left:43px;top:1px;width:14px;height:14px;background:#987db7;border:1px solid #6e5a86"></div><div class="lbl" style="font-weight:bold">Bounding geometry</div><svg class="ic" style="left:242px;top:3px;width:14px;height:12px" viewBox="0 0 14 12"><path d="M3 0v12M6 0v12M8.800 0v12M11.600 0v12" stroke="#666" stroke-width="1"/><rect x="1" y="2.700" width="12.700" height="6.600" rx="1.300" fill="#fff" stroke="#666" stroke-width="1"/></svg></div><div class="row" style="top:36px"><div class="cb"><svg class="abs" style="left:1px;top:1px;width:10px;height:10px" viewBox="0 0 10 10"><path d="M1.300 5.200l2.600 3.300 4.600-7.500" fill="none" stroke="#000" stroke-width="1.600"/></svg></div><div class="abs" style="left:43px;top:8.500px;width:16px;height:1px;background:#e8754e"></div><div class="lbl" style="font-weight:bold">roads</div></div><div class="row" style="top:54px"><svg class="ic" style="left:6px;top:7px;width:8px;height:5px" viewBox="0 0 8 5"><path d="M0 .3h8l-4 4.200z" fill="#5a5a5a"/></svg><div class="cb"></div><svg class="ic" style="left:45px;top:3px;width:13px;height:13px" viewBox="0 0 13 13"><rect x="4.33" y="0.00" width="4.33" height="4.33" fill="#adcbe9"/><rect x="0.00" y="4.33" width="4.33" height="4.33" fill="#adcbe9"/><rect x="8.67" y="4.33" width="4.33" height="4.33" fill="#adcbe9"/><rect x="4.33" y="8.67" width="4.33" height="4.33" fill="#adcbe9"/><rect x="0.25" y="0.25" width="3.83" height="3.83" fill="#2b3c53" stroke="#102139" stroke-width=".5"/><rect x="8.92" y="0.25" width="3.83" height="3.83" fill="#2b3c53" stroke="#102139" stroke-width=".5"/><rect x="4.58" y="4.58" width="3.83" height="3.83" fill="#2b3c53" stroke="#102139" stroke-width=".5"/><rect x="0.25" y="8.92" width="3.83" height="3.83" fill="#2b3c53" stroke="#102139" stroke-width=".5"/></svg><div class="lbl" style="font-weight:bold;color:#c2c2c2">srtm_41_19</div></div><div class="row" style="top:72px"><div class="abs" style="left:43px;top:1px;width:16px;height:16px;background:#000"></div><div class="lbl">0</div></div><div class="row" style="top:90px"><div class="lbl">1699</div></div></div>
<svg class="abs" style="left:295px;top:406px;width:1px;height:16px" viewBox="0 0 1 16"><rect x="0" y="0" width="1" height="1" fill="#adadad"/><rect x="0" y="3" width="1" height="1" fill="#adadad"/><rect x="0" y="6" width="1" height="1" fill="#adadad"/><rect x="0" y="9" width="1" height="1" fill="#adadad"/><rect x="0" y="12" width="1" height="1" fill="#adadad"/><rect x="0" y="15" width="1" height="1" fill="#adadad"/></svg>
<div class="abs" style="left:32px;top:685px;width:260px;height:1px;background:#c4c4c4"></div>
<div class="abs" style="left:32px;top:686px;width:74px;height:22px;box-sizing:border-box;background:#dedede;border:1px solid #c2c2c2;border-top:none;border-radius:0 0 3px 3px;text-align:center;line-height:23px;font-size:12px;padding-right:2px">Browser</div>
<div class="abs" style="left:105px;top:685px;width:64px;height:25px;box-sizing:border-box;background:linear-gradient(#fbfbfb,#f3f3f3);border:1px solid #c2c2c2;border-top:none;border-radius:0 0 3px 3px;text-align:center;line-height:27px;font-size:12px">Layers</div></div>
  <div id="canvas"><svg class="abs" style="left:0;top:0;width:1060px;height:594px" viewBox="327 168 1060 594"><path d="M507 200.500 L1016 200.500 Q1027 201.500 1036 205.500 L1103 244 L1194.500 322.500 L1198.300 330 L1198 395 L1197.300 501 Q1188 526 1175 553 Q1162 579 1147 603 Q1133 625 1119 642.500 L1101 662 Q1080 666.500 1055 667.700 Q990 671 920 671.300 L627 670.600 L467.500 499.800 L471.200 430 L478 292 L505 203 Z" fill="#987db7" stroke="#232323" stroke-width="1" stroke-linejoin="round"/><g transform="translate(327 168)" fill="#fff" stroke="#232323" stroke-width="1"><circle cx="458.3" cy="40.2" r="5.450"/><circle cx="456.1" cy="64.2" r="5.450"/><circle cx="208.1" cy="68.1" r="5.450"/><circle cx="260.3" cy="102.1" r="5.450"/><circle cx="391.9" cy="99.0" r="5.450"/><circle cx="312.2" cy="123.0" r="5.450"/><circle cx="335.0" cy="117.2" r="5.450"/><circle cx="369.1" cy="118.0" r="5.450"/><circle cx="182.1" cy="137.0" r="5.450"/><circle cx="195.0" cy="182.2" r="5.450"/><circle cx="235.1" cy="196.1" r="5.450"/><circle cx="388.0" cy="179.1" r="5.450"/><circle cx="446.1" cy="193.1" r="5.450"/><circle cx="317.2" cy="225.1" r="5.450"/><circle cx="292.1" cy="245.0" r="5.450"/><circle cx="410.9" cy="241.0" r="5.450"/><circle cx="485.1" cy="230.2" r="5.450"/><circle cx="219.0" cy="253.9" r="5.450"/><circle cx="319.4" cy="258.1" r="5.450"/><circle cx="451.1" cy="262.1" r="5.450"/><circle cx="535.3" cy="35.7" r="5.450"/><circle cx="538.1" cy="46.3" r="5.450"/><circle cx="552.1" cy="58.0" r="5.450"/><circle cx="572.2" cy="42.9" r="5.450"/><circle cx="610.1" cy="35.1" r="5.450"/><circle cx="663.1" cy="42.1" r="5.450"/><circle cx="692.2" cy="51.9" r="5.450"/><circle cx="646.1" cy="61.9" r="5.450"/><circle cx="694.1" cy="75.0" r="5.450"/><circle cx="549.3" cy="97.1" r="5.450"/><circle cx="631.0" cy="104.1" r="5.450"/><circle cx="636.1" cy="110.2" r="5.450"/><circle cx="533.1" cy="130.8" r="5.450"/><circle cx="725.1" cy="119.1" r="5.450"/><circle cx="766.1" cy="135.0" r="5.450"/><circle cx="777.3" cy="143.1" r="5.450"/><circle cx="795.1" cy="159.0" r="5.450"/><circle cx="640.3" cy="150.1" r="5.450"/><circle cx="855.1" cy="162.1" r="5.450"/><circle cx="870.4" cy="158.2" r="5.450"/><circle cx="857.1" cy="200.0" r="5.450"/><circle cx="858.2" cy="224.0" r="5.450"/><circle cx="704.2" cy="215.1" r="5.450"/><circle cx="569.1" cy="224.9" r="5.450"/><circle cx="647.2" cy="241.1" r="5.450"/><circle cx="171.2" cy="284.1" r="5.450"/><circle cx="270.0" cy="275.4" r="5.450"/><circle cx="263.9" cy="280.2" r="5.450"/><circle cx="276.2" cy="280.4" r="5.450"/><circle cx="407.0" cy="282.9" r="5.450"/><circle cx="506.3" cy="300.0" r="5.450"/><circle cx="212.0" cy="321.2" r="5.450"/><circle cx="483.2" cy="322.8" r="5.450"/><circle cx="443.0" cy="335.1" r="5.450"/><circle cx="189.1" cy="358.0" r="5.450"/><circle cx="314.9" cy="357.2" r="5.450"/><circle cx="374.1" cy="364.1" r="5.450"/><circle cx="227.1" cy="390.1" r="5.450"/><circle cx="234.0" cy="399.0" r="5.450"/><circle cx="266.1" cy="394.0" r="5.450"/><circle cx="299.0" cy="394.0" r="5.450"/><circle cx="315.2" cy="397.1" r="5.450"/><circle cx="297.9" cy="411.0" r="5.450"/><circle cx="268.3" cy="437.0" r="5.450"/><circle cx="354.0" cy="438.1" r="5.450"/><circle cx="420.1" cy="431.1" r="5.450"/><circle cx="460.9" cy="435.0" r="5.450"/><circle cx="485.1" cy="433.9" r="5.450"/><circle cx="444.1" cy="466.0" r="5.450"/><circle cx="366.0" cy="482.2" r="5.450"/><circle cx="383.0" cy="494.7" r="5.450"/><circle cx="565.2" cy="277.9" r="5.450"/><circle cx="677.9" cy="281.0" r="5.450"/><circle cx="598.1" cy="303.0" r="5.450"/><circle cx="595.9" cy="313.1" r="5.450"/><circle cx="600.1" cy="328.1" r="5.450"/><circle cx="604.3" cy="327.0" r="5.450"/><circle cx="650.0" cy="294.9" r="5.450"/><circle cx="660.9" cy="304.2" r="5.450"/><circle cx="703.9" cy="306.1" r="5.450"/><circle cx="653.9" cy="322.0" r="5.450"/><circle cx="633.0" cy="346.8" r="5.450"/><circle cx="632.2" cy="363.0" r="5.450"/><circle cx="680.2" cy="385.9" r="5.450"/><circle cx="664.0" cy="406.8" r="5.450"/><circle cx="518.3" cy="418.8" r="5.450"/><circle cx="614.0" cy="428.0" r="5.450"/><circle cx="651.1" cy="435.0" r="5.450"/><circle cx="636.9" cy="443.1" r="5.450"/><circle cx="696.9" cy="445.1" r="5.450"/><circle cx="738.7" cy="436.1" r="5.450"/><circle cx="570.2" cy="459.0" r="5.450"/><circle cx="613.2" cy="459.0" r="5.450"/><circle cx="648.1" cy="476.9" r="5.450"/><circle cx="567.2" cy="493.9" r="5.450"/><circle cx="756.9" cy="479.7" r="5.450"/><circle cx="777.8" cy="478.0" r="5.450"/><circle cx="846.2" cy="341.0" r="5.450"/><circle cx="833.1" cy="370.8" r="5.450"/><circle cx="826.1" cy="399.0" r="5.450"/></g></svg></div>
  <div id="status"><div class="fld" style="left:4px;top:714px;width:248px;height:23px"></div>
<svg class="ic" style="left:13px;top:719px;width:12px;height:12px" viewBox="0 0 12 12"><circle cx="4.500" cy="4.500" r="3.600" fill="none" stroke="#8d8d8d" stroke-width="1.200"/><path d="M7.200 7.200l3.300 3.500" stroke="#8d8d8d" stroke-width="1.400"/></svg>
<div class="abs" style="left:33px;top:719px;font-size:12px;line-height:15px;color:#8c8c8c;white-space:nowrap">Type to locate (Ctrl+K)</div>
<div class="st" style="left:260px">Ready</div>
<div class="st" style="left:552px">Coordinate</div>
<div class="fld" style="left:605px;top:714px;width:90px;height:22px;padding-left:2.500px">20.4140,-34.0239</div>
<svg class="ic" style="left:699px;top:717px;width:16px;height:16px" viewBox="0 0 16 16"><g transform="rotate(-38 8 8.500)"><rect x="4.300" y="1.300" width="8.600" height="14" rx="4.200" fill="#b9a6a0" opacity=".6" transform="translate(1.200 .4)"/><rect x="3.800" y="1" width="8.600" height="14" rx="4.200" fill="#fff" stroke="#0c0c0c" stroke-width="1.500"/><path d="M3.800 7.300h8.600" stroke="#0c0c0c" stroke-width="1.400"/><path d="M6.600 1.500v5.500M9.600 1.500v5.500" stroke="#0c0c0c" stroke-width="1.300"/><path d="M8.100 1.200v5.800" stroke="#fff" stroke-width="1.300"/><circle cx="8.100" cy="11.200" r="1.500" fill="none" stroke="#0c0c0c" stroke-width="1.200"/></g><path d="M12.300 3.200l.8-.9M14 1.500l.8-.5M.8 10.300l1.300.4" stroke="#333" stroke-width=".8"/></svg>
<div class="st" style="left:728px">Scale</div>
<div class="fld" style="left:756px;top:714px;width:96px;height:23px;padding-left:3px;line-height:22px">1:61850<div class="abs" style="left:74px;top:0;width:1px;height:22px;background:#c4c4c4"></div></div>
<svg class="ic" style="left:836px;top:724px;width:8px;height:5px" viewBox="0 0 8 5"><path d="M0 .3h8l-4 4.200z" fill="#4a4a4a"/></svg>
<svg class="ic" style="left:864px;top:718px;width:13px;height:15px" viewBox="0 0 13 15"><path d="M3 7v-2.800a3.200 3.200 0 0 1 6.400 0v2.800" fill="none" stroke="#8a8a8a" stroke-width="1.500"/><rect x=".3" y="6.300" width="11.800" height="8.400" rx="1.300" fill="#5c5c5c"/></svg>
<div class="st" style="left:885px">Magnifier</div>
<div class="fld" style="left:931px;top:715px;width:95px;height:22px;padding-left:5px">100%<div class="abs" style="left:80px;top:0;width:1px;height:21px;background:#c4c4c4"></div></div><svg class="abs" style="left:1014.5px;top:720px;width:7px;height:12px" viewBox="0 0 7 12"><path d="M.3 4.300l3.200-3.300 3.200 3.300zM.3 7.700l3.200 3.300 3.200-3.300z" fill="#5a5a5a"/></svg>
<div class="st" style="left:1035px">Rotation</div>
<div class="fld" style="left:1082px;top:715px;width:91px;height:22px;padding-left:5px">0.0 °<div class="abs" style="left:76px;top:0;width:1px;height:21px;background:#c4c4c4"></div></div><svg class="abs" style="left:1161.5px;top:720px;width:7px;height:12px" viewBox="0 0 7 12"><path d="M.3 4.300l3.200-3.300 3.200 3.300zM.3 7.700l3.200 3.300 3.200-3.300z" fill="#5a5a5a"/></svg>
<div class="abs" style="left:1179px;top:719px;width:12px;height:12px;background:#fff;border:1px solid #bdbdbd;border-radius:1px"><svg class="abs" style="left:1px;top:1px;width:10px;height:10px" viewBox="0 0 10 10"><path d="M1.300 5.200l2.600 3.300 4.600-7.500" fill="none" stroke="#000" stroke-width="1.600"/></svg></div>
<div class="st" style="left:1198px">Render</div>
<svg class="ic" style="left:1248px;top:718px;width:16px;height:16px" viewBox="0 0 16 16"><ellipse cx="8" cy="8" rx="7.300" ry="6.500" fill="none" stroke="#666" stroke-width=".9"/><ellipse cx="8" cy="8" rx="3.500" ry="6.500" fill="none" stroke="#666" stroke-width=".8"/><path d="M8 1.500v13M.7 8h14.600M2 4.600h12M2 11.400h12" stroke="#666" stroke-width=".8"/><path d="M4 1.700l8 0" stroke="#666" stroke-width=".8"/></svg>
<div class="st" style="left:1268px">EPSG:4326</div>
<svg class="ic" style="left:1337px;top:719px;width:16px;height:15px" viewBox="0 0 16 15"><path d="M8 .3c4.300 0 8 2.700 8 6.200 0 2.200-1.400 4-3.500 5.100l2 3.200-4.500-2.300c-.7.100-1.300.2-2 .2-4.300 0-8-2.700-8-6.200s3.700-6.200 8-6.200z" fill="#686868"/><g fill="#fff"><circle cx="4.300" cy="6.500" r="1.200"/><circle cx="8" cy="6.500" r="1.200"/><circle cx="11.700" cy="6.500" r="1.200"/></g></svg></div>
</div>
</body>
</html>
